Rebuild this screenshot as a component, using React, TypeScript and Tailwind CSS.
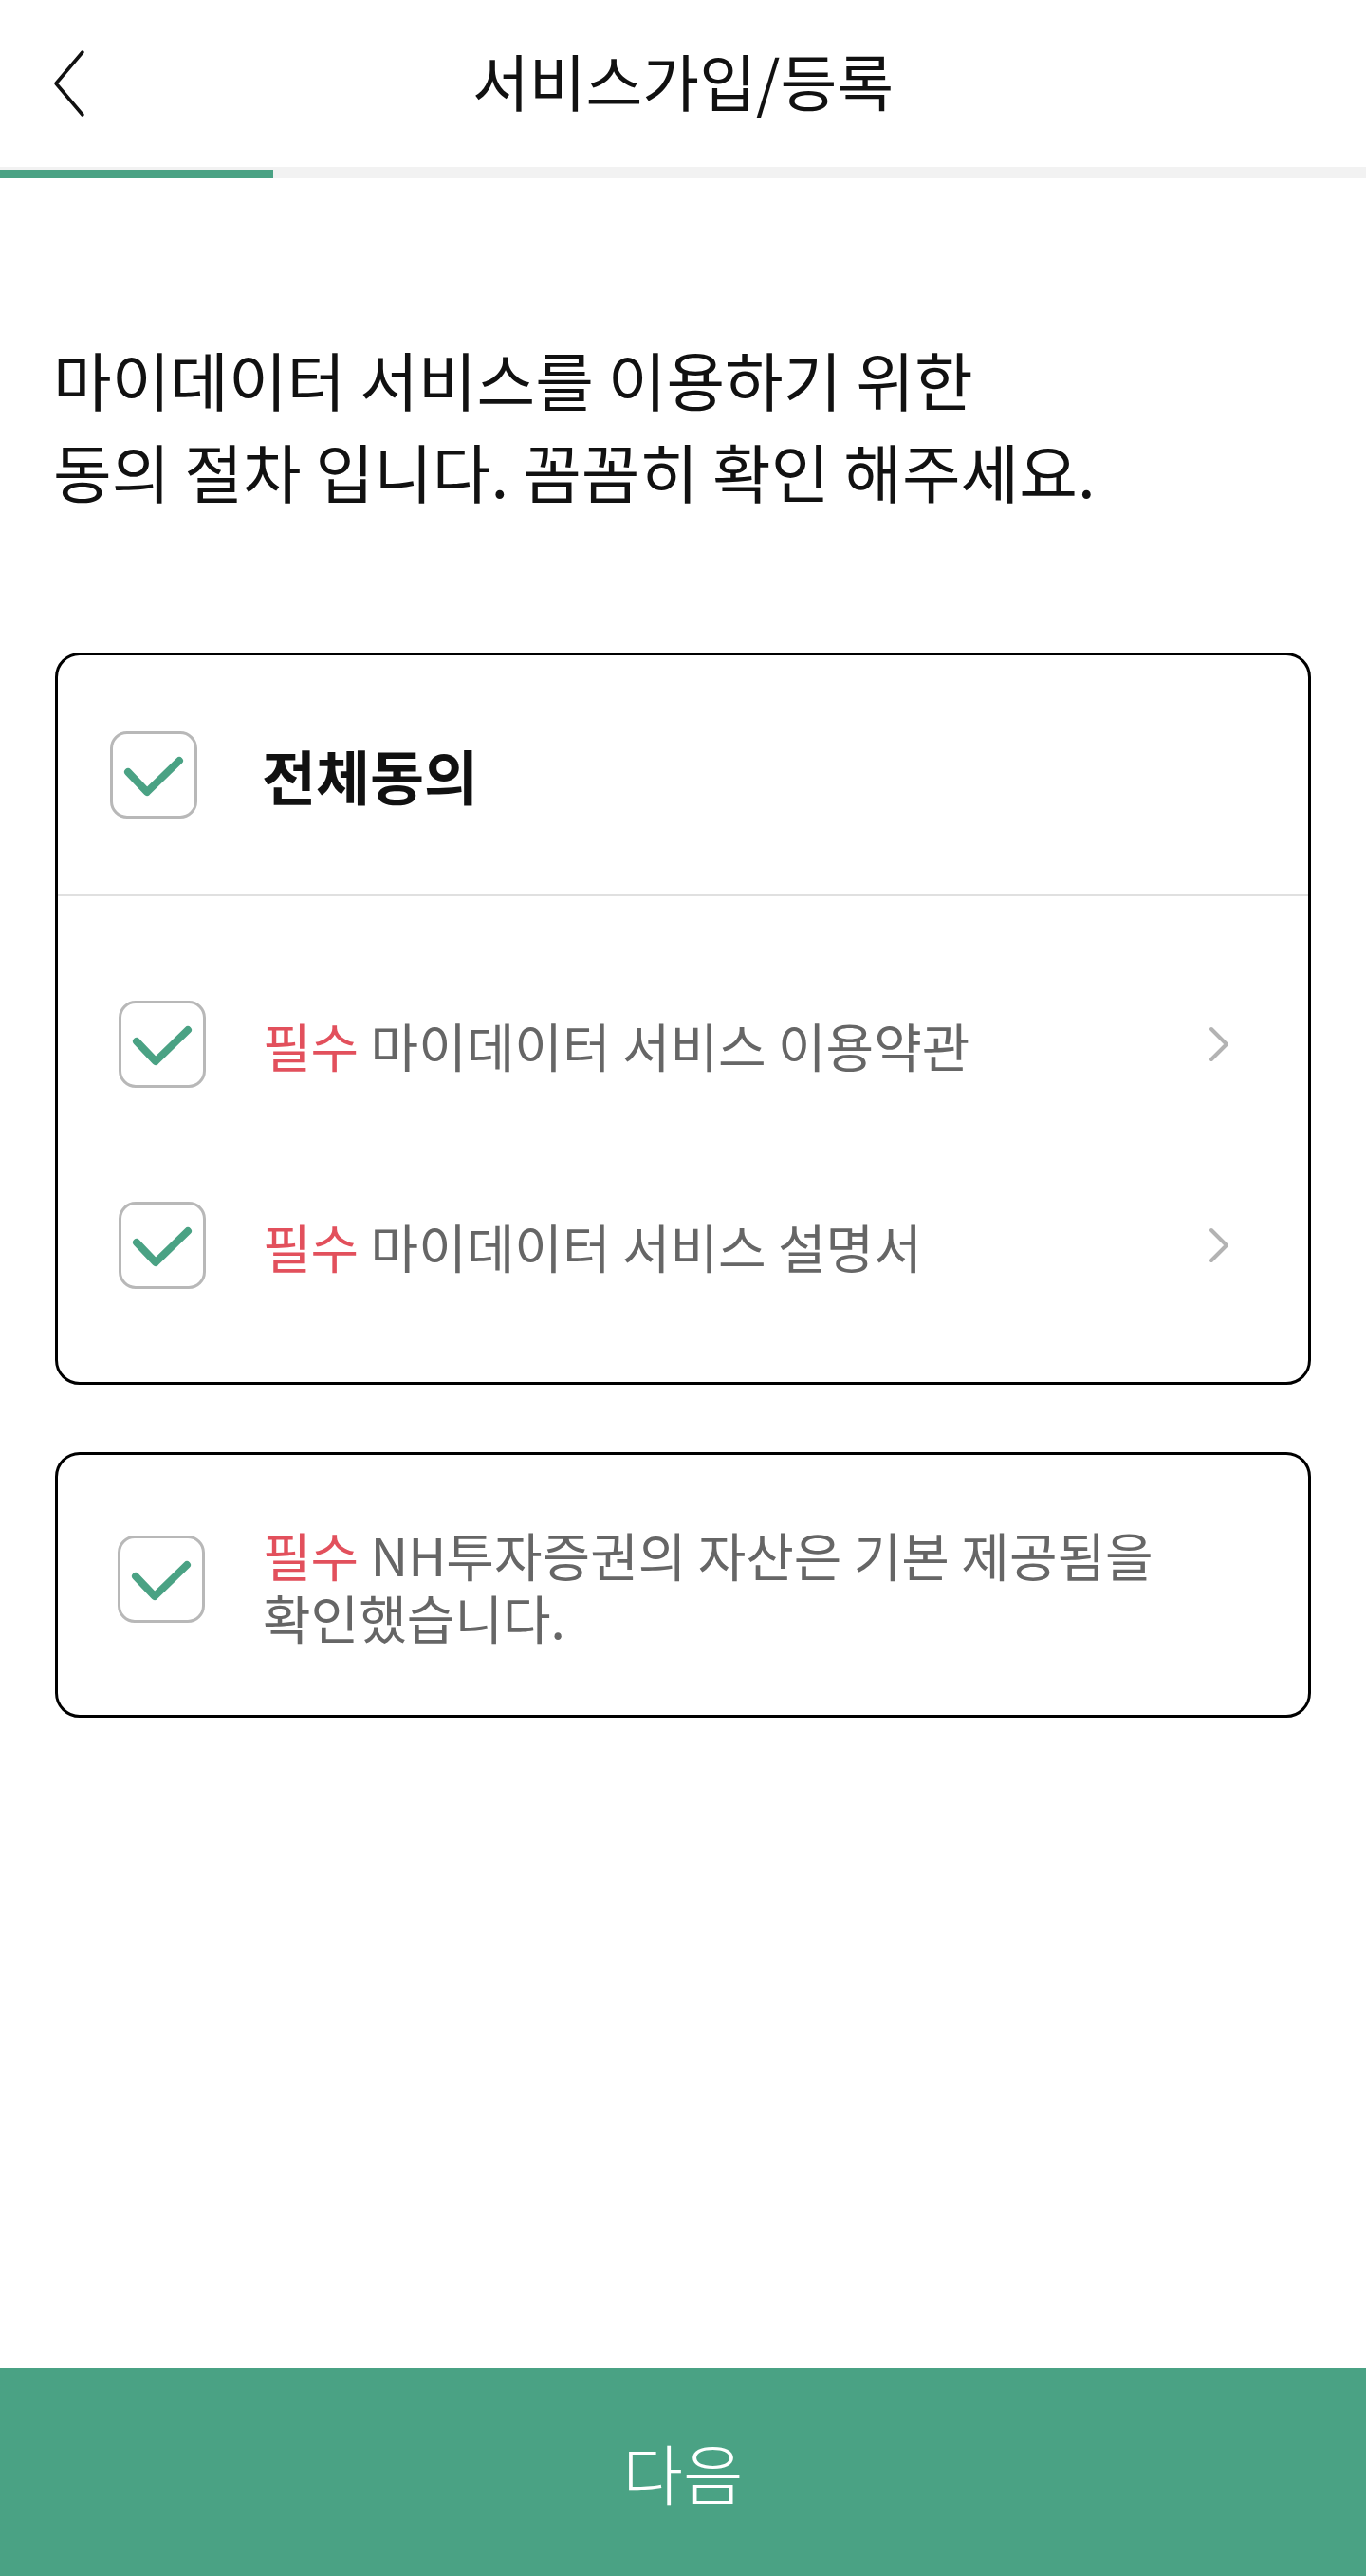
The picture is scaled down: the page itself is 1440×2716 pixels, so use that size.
const FONT = { fontFamily: '"Noto Sans CJK KR", "Noto Sans", sans-serif' };

function CheckBox({ className = "" }: { className?: string }) {
  return (
    <div className={`w-[92px] h-[92px] shrink-0 rounded-[18px] border-[3px] border-[#b8b8b8] bg-white flex items-center justify-center ${className}`}>
      <svg width="86" height="86" viewBox="3 3 86 86" fill="none">
        <path d="M19 43 L39 64 L73 31" stroke="#4aa284" strokeWidth="8" strokeLinecap="round" strokeLinejoin="round" />
      </svg>
    </div>
  );
}

function Chevron() {
  return (
    <svg width="24" height="40" viewBox="0 0 24 40" fill="none" className="shrink-0">
      <path d="M4 4 L20 20 L4 36" stroke="#b3b3b3" strokeWidth="4" strokeLinecap="round" strokeLinejoin="round" />
    </svg>
  );
}

const TERMS = ["마이데이터 서비스 이용약관", "마이데이터 서비스 설명서"];

export default function App() {
  return (
    <div className="min-h-[2716px] bg-white flex flex-col" style={FONT}>
      {/* Header */}
      <header className="relative h-[176px] flex items-center justify-center">
        <button className="absolute left-[50px] top-[48px] w-[44px] h-[80px] flex items-center justify-center" aria-label="뒤로">
          <svg width="36" height="72" viewBox="0 0 36 72" fill="none">
            <path d="M33 3 L5 36 L33 69" stroke="#111" strokeWidth="3.5" strokeLinecap="round" strokeLinejoin="round" />
          </svg>
        </button>
        <h1 className="text-[65px] text-[#111] leading-none mt-[-8px]">서비스가입/등록</h1>
      </header>

      {/* Progress */}
      <div className="h-[12px] bg-[#f2f2f2] flex items-end">
        <div className="h-[9px] w-[288px] bg-[#4aa284]" />
      </div>

      {/* Intro */}
      <p className="mt-[162px] pl-[56px] text-[67px] leading-[97px] text-[#111]">
        마이데이터 서비스를 이용하기 위한
        <br />
        동의 절차 입니다. 꼼꼼히 확인 해주세요.
      </p>

      {/* Terms card */}
      <div className="mt-[144px] mx-[58px] rounded-[26px] border-[3px] border-black">
        <div className="h-[254px] flex items-center pl-[55px] gap-[68px] border-b-2 border-[#e0e0e0]">
          <CheckBox />
          <span className="text-[62px] font-bold text-[#111]">전체동의</span>
        </div>
        <div className="pt-[50px] pb-[38px]">
          {TERMS.map((t) => (
            <div key={t} className="h-[212px] flex items-center pl-[64px] pr-[82px]">
              <CheckBox />
              <span className="ml-[60px] flex-1 text-[55px] text-[#666]">
                <span className="text-[#e2505c]">필수</span> {t}
              </span>
              <Chevron />
            </div>
          ))}
        </div>
      </div>

      {/* Asset card */}
      <div className="mt-[71px] mx-[58px] h-[280px] rounded-[26px] border-[3px] border-black flex items-center pl-[63px] pr-[80px]">
        <CheckBox className="-mt-[12px]" />
        <p className="ml-[61px] text-[55px] leading-[66px] text-[#666] break-keep">
          <span className="text-[#e2505c]">필수</span> NH투자증권의 자산은 기본 제공됨을 확인했습니다.
        </p>
      </div>

      {/* Next */}
      <button className="mt-auto h-[219px] w-full bg-[#4aa284] text-white text-[69px] font-light flex items-center justify-center">
        다음
      </button>
    </div>
  );
}
